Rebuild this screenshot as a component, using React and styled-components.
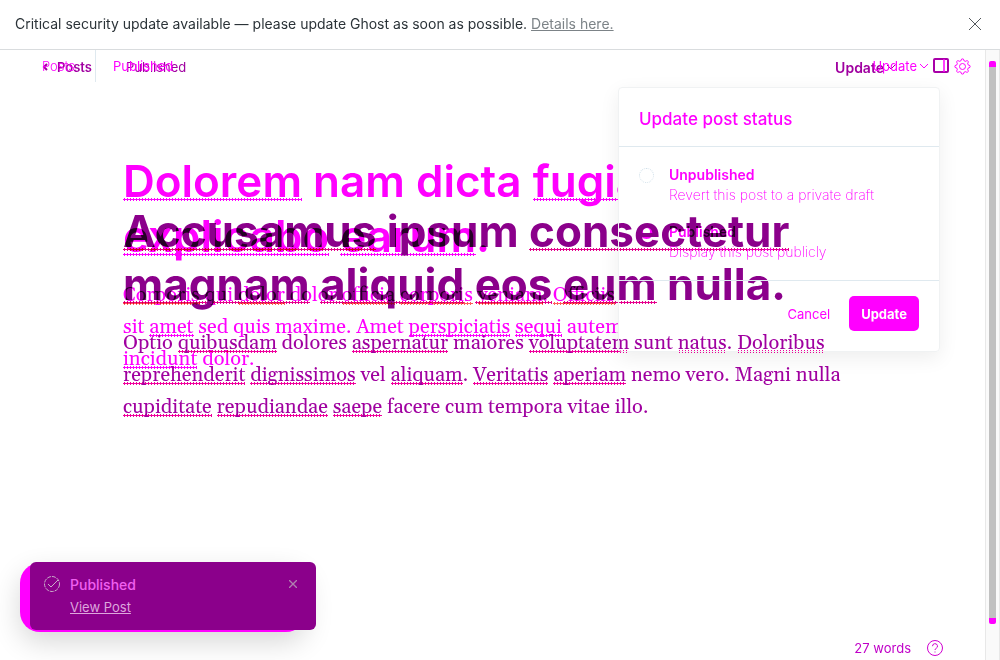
import React from "react";
import styled, { createGlobalStyle, css } from "styled-components";

const Global = createGlobalStyle`
  *, *::before, *::after { box-sizing: border-box; }
  body { margin: 0; background: #fff; font-family: Inter, "Liberation Sans", sans-serif; font-size: 13px; color: #2b3338; }
  button, input { font: inherit; margin: 0; }
`;

const Page = styled.div`
  display: flex;
  flex-direction: column;
  min-height: 100vh;
`;

const Banner = styled.div`
  display: flex;
  align-items: center;
  justify-content: space-between;
  height: 50px;
  padding: 0 19px 2px 15px;
  border-bottom: 1px solid #d9dcde;
  font-size: 14px;
  a { color: #7c8387; }
`;

const IconButton = styled.button`
  display: flex;
  padding: 0;
  border: 0;
  background: none;
  color: ${(p) => p.$color || "#54595d"};
`;

const Workspace = styled.div`
  display: flex;
  flex: 1;
`;

const Stack = styled.main`
  display: grid;
  flex: 1;
  min-width: 0;
  grid-template-columns: minmax(0, 1fr);
`;

const Screen = styled.section`
  grid-area: 1 / 1;
  display: flex;
  flex-direction: column;
  min-width: 0;
`;

const Toolbar = styled.header`
  display: flex;
  align-items: center;
  height: 34px;
  padding: 0 14px ${(p) => p.$lift || 0}px 42px;
  color: ${(p) => p.$color};
`;

const BackLink = styled.a`
  display: flex;
  align-items: center;
  gap: 9px;
  color: inherit;
  text-decoration: none;
  font-weight: ${(p) => (p.$bold ? 600 : 300)};
`;

const PostsCell = styled.div`
  display: flex;
  align-items: center;
  width: 54px;
  height: 32px;
  border-right: 1px solid #dfe9ef;
`;

const Status = styled.span`
  margin-left: ${(p) => p.$gap}px;
`;

const Actions = styled.div`
  display: flex;
  align-items: center;
  gap: 5px;
  margin-left: auto;
  padding-right: ${(p) => p.$end || 0}px;
`;

const UpdateMenu = styled.button`
  display: flex;
  align-items: center;
  gap: 3px;
  padding: 0;
  border: 0;
  background: none;
  color: inherit;
  font-size: ${(p) => (p.$bold ? 14 : 13)}px;
  font-weight: ${(p) => (p.$bold ? 600 : 400)};
`;

const Row = styled.div`
  display: flex;
  align-items: flex-start;
`;

const Article = styled.article`
  flex: 1;
  min-width: 0;
  overflow: hidden;
  padding: ${(p) => p.$top}px 0 20px 123px;
  white-space: nowrap;
`;

const Title = styled.h1`
  margin: 0;
  font-size: 44px;
  font-weight: ${(p) => p.$weight};
  line-height: ${(p) => p.$line}px;
  color: ${(p) => p.$color};
`;

const Body = styled.p`
  margin: ${(p) => p.$gap}px 0 0;
  font-family: Georgia, Gelasio, "DejaVu Serif", serif;
  font-size: 20px;
  line-height: 32px;
  color: ${(p) => p.$color};
`;

const Line = styled.span`
  display: grid;
  ${(p) =>
    p.$burn &&
    css`
      &::before {
        content: attr(data-copy);
        grid-area: 1 / 1;
        color: #878787;
        mix-blend-mode: color-burn;
      }
      > span {
        grid-area: 1 / 1;
        mix-blend-mode: multiply;
      }
    `}
`;

const Misspelt = styled.span`
  padding-bottom: 1px;
  background: radial-gradient(circle, ${(p) => p.$dot} 1px, transparent 1.4px) 0 ${(p) => p.$at}px / 3px 3px repeat-x;
`;

const Popup = styled.form`
  width: 322px;
  margin: 3px 45px 0 0;
  border: 1px solid #f0f2f3;
  border-radius: 4px;
  box-shadow: 0 6px 20px rgba(0, 0, 0, 0.07);
  color: #ff00ff;
`;

const PopupTitle = styled.h2`
  margin: 0;
  padding: 0 20px;
  font-size: 17px;
  font-weight: 500;
  line-height: 62px;
  height: 59px;
  border-bottom: 1px solid #dfe9ef;
`;

const Options = styled.div`
  display: grid;
  gap: 16px;
  padding: 18px 20px;
  height: 134px;
  border-bottom: 1px solid #dfe9ef;
`;

const Option = styled.label`
  display: grid;
  grid-template-columns: 15px 1fr;
  column-gap: 15px;
  align-items: center;
  height: 40px;
  strong { font-size: 14px; font-weight: 600; line-height: 20px; }
  small { grid-column: 2; font-size: 14px; font-weight: 200; line-height: 20px; }
`;

const Radio = styled.input`
  appearance: none;
  width: 15px;
  height: 15px;
  border: 1px dotted #cfdfe9;
  border-radius: 50%;
  &:checked { border: 4px solid #ff00ff; mix-blend-mode: multiply; }
`;

const PopupFooter = styled.div`
  display: flex;
  align-items: center;
  justify-content: flex-end;
  gap: 19px;
  height: 70px;
  padding: 0 20px 5px;
`;

const Button = styled.button`
  height: 35px;
  padding: 0 ${(p) => (p.$primary ? 12 : 0)}px;
  border: 0;
  border-radius: 5px;
  background: ${(p) => (p.$primary ? "#ff00ff" : "none")};
  color: ${(p) => (p.$primary ? "#fff" : "#ff00ff")};
  font-weight: ${(p) => (p.$primary ? 700 : 400)};
`;

const Footer = styled.footer`
  display: flex;
  align-items: center;
  justify-content: flex-end;
  gap: 16px;
  margin-top: auto;
  height: 24px;
  padding-right: 42px;
  color: #c000c8;
`;

const Scrollbar = styled.div`
  display: flex;
  width: 15px;
  padding: 11px 3px 36px;
  border: solid #e8e8e8;
  border-width: 0 1px;
  background: #fafafa;
`;

const Thumb = styled.div`
  flex: 1;
  border: solid #ff00ff;
  border-width: 6px 0;
  border-radius: 2px;
  background: #c1c1c1;
`;

const ToastBack = styled.div`
  position: fixed;
  left: 20px;
  bottom: 28px;
  width: 286px;
  height: 69px;
  border-radius: 20px;
  background: #ff00ff;
  box-shadow: 0 10px 28px rgba(0, 0, 0, 0.16);
`;

const Toast = styled.aside`
  position: fixed;
  left: 30px;
  bottom: 30px;
  display: grid;
  grid-template-columns: 18px 1fr 10px;
  column-gap: 9px;
  align-items: center;
  width: 286px;
  height: 68px;
  padding: 10px 17px 12px 13px;
  border-radius: 6px;
  background: #8b008b;
  color: #f060f0;
  font-size: 14px;
  font-weight: 500;
  a { grid-column: 2; color: #dda6dd; font-size: 13px; font-weight: 400; }
`;

const Chevron = ({ left }) => (
  <svg width={left ? 6 : 8} height="8" viewBox={left ? "0 0 6 8" : "0 0 8 8"} fill="none" stroke="currentColor" strokeWidth={left ? 2 : 1}>
    <path d={left ? "M5 1 2 4l3 3" : "M0 2l4 4 4-4"} />
  </svg>
);

const Cross = ({ size, weight = 1 }) => (
  <svg width={size} height={size} viewBox="0 0 12 12" stroke="currentColor" strokeWidth={weight}>
    <path d="M0 0 12 12M12 0 0 12" />
  </svg>
);

const gearPath = Array.from({ length: 64 }, (_, i) => {
  const a = (i / 64) * Math.PI * 2;
  const r = 6.7 + Math.max(-0.9, Math.min(0.9, 1.7 * Math.cos(8 * a)));
  return `${i ? "L" : "M"}${(8.5 + r * Math.cos(a)).toFixed(2)} ${(8.5 + r * Math.sin(a)).toFixed(2)}`;
}).join("") + "Z";

// Words wrapped in asterisks carry the spell-check dots.
function Lines({ lines, dot, at, burn }) {
  return lines.map((line) => (
    <Line key={line} $burn={burn} data-copy={line.replaceAll("*", "")}>
      <span>
        {line.split("*").map((part, i) =>
          i % 2 ? <Misspelt key={i} $dot={dot} $at={at}>{part}</Misspelt> : part
        )}
      </span>
    </Line>
  ));
}

export default function App() {
  return (
    <Page>
      <Global />
      <Banner>
        <span>
          Critical security update available — please update Ghost as soon as possible. <a href="#details">Details here.</a>
        </span>
        <IconButton aria-label="Close"><Cross size={12} /></IconButton>
      </Banner>
      <Workspace>
        <Stack>
          <Screen>
            <Toolbar $color="#a000a0">
              <BackLink $bold href="#posts"><Chevron left /> Posts</BackLink>
              <Status $gap={34}>Published</Status>
              <Actions $end={76}>
                <UpdateMenu $bold>Update <Chevron /></UpdateMenu>
              </Actions>
            </Toolbar>
            <Article $top={121}>
              <Title $weight={700} $line={53} $color="#8b008b">
                <Lines dot="#e6008c" at={44} lines={["*Accusamus* ipsum *consectetur*", "*magnam* *aliquid* *eos* *eum* nulla."]} />
              </Title>
              <Body $gap={16} $color="#a000a0">
                <Lines
                  dot="#f0009c"
                  at={20}
                  lines={[
                    "Optio *quibusdam* dolores *aspernatur* maiores *voluptatem* sunt *natus*. *Doloribus*",
                    "*reprehenderit* *dignissimos* vel *aliquam*. *Veritatis* *aperiam* nemo vero. Magni nulla",
                    "*cupiditate* *repudiandae* *saepe* facere cum tempora vitae illo.",
                  ]}
                />
              </Body>
            </Article>
          </Screen>
          <Screen>
            <Toolbar $color="#ff00ff" $lift={2}>
              <PostsCell><BackLink href="#all-posts">Posts</BackLink></PostsCell>
              <Status $gap={17}>Published</Status>
              <Actions>
                <UpdateMenu>Update <Chevron /></UpdateMenu>
                <IconButton aria-label="Sidebar" $color="#a800a8">
                  <svg width="16" height="16" viewBox="0 0 16 16" fill="none" stroke="currentColor">
                    <rect x="1" y="1" width="14" height="13" rx="1" strokeWidth="2" />
                    <path d="M11 1v13" strokeWidth="1.5" stroke="#f0f" />
                  </svg>
                </IconButton>
                <IconButton aria-label="Settings" $color="#ff00ff">
                  <svg width="17" height="17" viewBox="0 0 17 17" fill="none" stroke="currentColor">
                    <path d={gearPath} />
                    <circle cx="8.5" cy="8.5" r="3" />
                  </svg>
                </IconButton>
              </Actions>
            </Toolbar>
            <Row>
              <Article $top={70}>
                <Title $weight={600} $line={55} $color="#ff00ff">
                  <Lines burn dot="#ff00ff" at={44} lines={["*Dolorem* nam dicta *fugiat*", "*explicabo* *earum*."]} />
                </Title>
                <Body $gap={15} $color="#ff00ff">
                  <Lines
                    burn
                    dot="#ff5a5a"
                    at={20}
                    lines={["*Corporis* qui *dolor* dolor *officia* *corporis* *veniam*. *Officiis*"]}
                  />
                  <Lines
                    burn
                    dot="#ff00ff"
                    at={20}
                    lines={["sit *amet* sed quis maxime. Amet *perspiciatis* *sequi* autem", "*incidunt* dolor."]}
                  />
                </Body>
              </Article>
              <Popup>
                <PopupTitle>Update post status</PopupTitle>
                <Options>
                  <Option>
                    <Radio type="radio" name="status" />
                    <strong>Unpublished</strong>
                    <small>Revert this post to a private draft</small>
                  </Option>
                  <Option>
                    <Radio type="radio" name="status" defaultChecked />
                    <strong><Lines burn lines={["Published"]} /></strong>
                    <small>Display this post publicly</small>
                  </Option>
                </Options>
                <PopupFooter>
                  <Button type="button">Cancel</Button>
                  <Button type="button" $primary>Update</Button>
                </PopupFooter>
              </Popup>
            </Row>
            <Footer>
              <span>27 words</span>
              <IconButton aria-label="Help" $color="#d000d0">
                <svg width="16" height="16" viewBox="0 0 16 16" fill="none" stroke="currentColor">
                  <circle cx="8" cy="8" r="7.5" />
                  <path d="M5.5 6.2a2.5 2.5 0 1 1 3.6 2.2Q8 9 8 10M8 11.5v1" />
                </svg>
              </IconButton>
            </Footer>
          </Screen>
        </Stack>
        <Scrollbar><Thumb /></Scrollbar>
      </Workspace>
      <ToastBack />
      <Toast>
        <svg width="18" height="18" viewBox="0 0 18 18" fill="none" stroke="#c9b0c9">
          <circle cx="9" cy="9" r="7.5" strokeDasharray="4 1" />
          <path d="M5 9l3 3 7-7" />
        </svg>
        <span>Published</span>
        <IconButton aria-label="Dismiss" $color="#b080b0"><Cross size={8} weight={2} /></IconButton>
        <a href="#post">View Post</a>
      </Toast>
    </Page>
  );
}
